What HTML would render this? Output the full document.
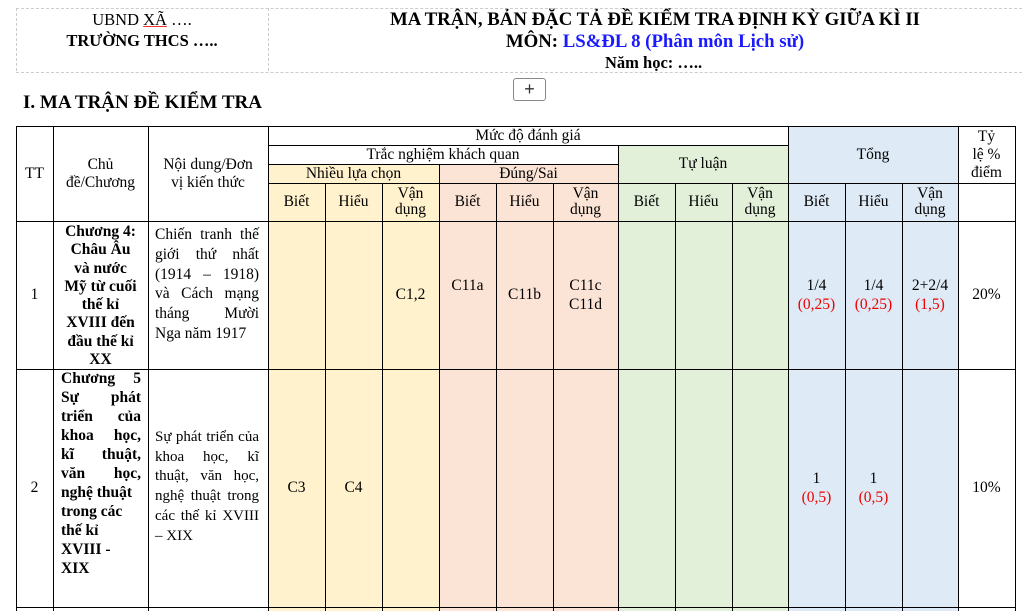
<!DOCTYPE html>
<html><head><meta charset="utf-8"><style>
body{margin:0;width:1022px;height:611px;overflow:hidden;background:#fff;font-family:"Liberation Serif","Times New Roman",serif;color:#000;position:relative}
.a{position:absolute}
.c{position:absolute;display:flex;align-items:center;justify-content:center;text-align:center;font-size:15.5px;line-height:16px;box-sizing:border-box}
.v{position:absolute;width:1px;background:#000}
.h{position:absolute;height:1px;background:#000}
.r{color:#e00}
.b{font-weight:bold}
.js{text-align:justify;text-align-last:justify}
</style></head><body>
<div class="a" style="left:16px;top:8px;width:1006px;height:63px;border-top:1px dashed #ccc;border-bottom:1px dashed #ccc"></div>
<div class="a" style="left:16px;top:8px;width:0;height:63px;border-left:1px dashed #ccc"></div>
<div class="a" style="left:268px;top:8px;width:0;height:63px;border-left:1px dashed #ccc"></div>
<div class="a" style="left:16px;top:9px;width:252px;text-align:center;font-size:16.5px;line-height:21px">UBND <span style="text-decoration:underline;text-decoration-color:#e33">XÃ</span> ….<br><b>TRƯỜNG THCS …..</b></div>
<div class="a b" style="left:278px;top:9px;width:754px;text-align:center;font-size:18.8px;line-height:22px">MA TRẬN, BẢN ĐẶC TẢ ĐỀ KIỂM TRA ĐỊNH KỲ GIỮA KÌ II<br>MÔN: <span style="color:#1a1aff">LS&amp;ĐL 8 (Phân môn Lịch sử)</span></div>
<div class="a b" style="left:605px;top:53px;font-size:16.5px">Năm học: …..</div>
<div class="a" style="left:513px;top:78px;width:31px;height:21px;border:1px solid #888;border-radius:3px;text-align:center;font:18px/20px 'Liberation Sans',sans-serif;color:#333">+</div>
<div class="a b" style="left:23px;top:92px;font-size:19px">I. MA TRẬN ĐỀ KIỂM TRA</div>

<div class="a" style="left:268px;top:164px;width:171px;height:447px;background:#fff2cc"></div>
<div class="a" style="left:439px;top:164px;width:179px;height:447px;background:#fbe4d5"></div>
<div class="a" style="left:618px;top:145px;width:170px;height:466px;background:#e2efd9"></div>
<div class="a" style="left:788px;top:126px;width:170px;height:485px;background:#deeaf6"></div>

<div class="h" style="left:16px;top:126px;width:1000px"></div>
<div class="h" style="left:268px;top:145px;width:520px"></div>
<div class="h" style="left:268px;top:164px;width:350px"></div>
<div class="h" style="left:268px;top:183px;width:748px"></div>
<div class="h" style="left:16px;top:221px;width:1000px"></div>
<div class="h" style="left:16px;top:369px;width:1000px"></div>
<div class="h" style="left:16px;top:607px;width:1000px"></div>
<div class="v" style="left:16px;top:126px;height:485px"></div>
<div class="v" style="left:53px;top:126px;height:485px"></div>
<div class="v" style="left:148px;top:126px;height:485px"></div>
<div class="v" style="left:268px;top:126px;height:485px"></div>
<div class="v" style="left:325px;top:183px;height:428px"></div>
<div class="v" style="left:382px;top:183px;height:428px"></div>
<div class="v" style="left:439px;top:164px;height:447px"></div>
<div class="v" style="left:496px;top:183px;height:428px"></div>
<div class="v" style="left:553px;top:183px;height:428px"></div>
<div class="v" style="left:618px;top:145px;height:466px"></div>
<div class="v" style="left:675px;top:183px;height:428px"></div>
<div class="v" style="left:732px;top:183px;height:428px"></div>
<div class="v" style="left:788px;top:126px;height:485px"></div>
<div class="v" style="left:845px;top:183px;height:428px"></div>
<div class="v" style="left:902px;top:183px;height:428px"></div>
<div class="v" style="left:958px;top:126px;height:485px"></div>
<div class="v" style="left:1015px;top:126px;height:485px"></div>

<div class="c" style="left:16px;top:126px;width:37px;height:95px">TT</div>
<div class="c" style="left:53px;top:126px;width:95px;height:95px;line-height:18px"><div>Chủ<br>đề/Chương</div></div>
<div class="c" style="left:148px;top:126px;width:120px;height:95px;line-height:18px"><div>Nội dung/Đơn<br>vị kiến thức</div></div>
<div class="c" style="left:268px;top:126px;width:520px;height:19px">Mức độ đánh giá</div>
<div class="c" style="left:268px;top:145px;width:350px;height:19px">Trắc nghiệm khách quan</div>
<div class="c" style="left:268px;top:164px;width:171px;height:19px">Nhiều lựa chọn</div>
<div class="c" style="left:439px;top:164px;width:179px;height:19px">Đúng/Sai</div>
<div class="c" style="left:618px;top:145px;width:170px;height:38px">Tự luận</div>
<div class="c" style="left:788px;top:126px;width:170px;height:57px">Tổng</div>
<div class="c" style="left:958px;top:126px;width:57px;height:57px;line-height:18px"><div>Tỷ<br>lệ %<br>điểm</div></div>
<div class="c" style="left:268px;top:183px;width:57px;height:38px">Biết</div>
<div class="c" style="left:325px;top:183px;width:57px;height:38px">Hiểu</div>
<div class="c" style="left:382px;top:183px;width:57px;height:38px"><div>Vận<br>dụng</div></div>
<div class="c" style="left:439px;top:183px;width:57px;height:38px">Biết</div>
<div class="c" style="left:496px;top:183px;width:57px;height:38px">Hiểu</div>
<div class="c" style="left:553px;top:183px;width:65px;height:38px"><div>Vận<br>dụng</div></div>
<div class="c" style="left:618px;top:183px;width:57px;height:38px">Biết</div>
<div class="c" style="left:675px;top:183px;width:57px;height:38px">Hiểu</div>
<div class="c" style="left:732px;top:183px;width:56px;height:38px"><div>Vận<br>dụng</div></div>
<div class="c" style="left:788px;top:183px;width:57px;height:38px">Biết</div>
<div class="c" style="left:845px;top:183px;width:57px;height:38px">Hiểu</div>
<div class="c" style="left:902px;top:183px;width:56px;height:38px"><div>Vận<br>dụng</div></div>

<div class="c" style="left:16px;top:221px;width:37px;height:148px">1</div>
<div class="a b" style="left:53px;top:223px;width:95px;text-align:center;font-size:15.5px;line-height:18.3px">Chương 4:<br>Châu Âu<br>và nước<br>Mỹ từ cuối<br>thế kỉ<br>XVIII đến<br>đầu thế kỉ<br>XX</div>
<div class="a" style="left:155px;top:225px;width:104px;font-size:15.5px;line-height:19.8px">
<div class="js">Chiến tranh thế</div><div class="js">giới thứ nhất</div><div class="js">(1914 – 1918)</div><div class="js">và Cách mạng</div><div class="js">tháng Mười</div><div>Nga năm 1917</div></div>
<div class="c" style="left:382px;top:221px;width:57px;height:148px">C1,2</div>
<div class="c" style="left:439px;top:221px;width:57px;height:130px">C11a</div>
<div class="c" style="left:496px;top:221px;width:57px;height:148px">C11b</div>
<div class="c" style="left:553px;top:221px;width:65px;height:148px;line-height:19px"><div>C11c<br>C11d</div></div>
<div class="c" style="left:788px;top:221px;width:57px;height:148px;line-height:19px"><div>1/4<br><span class="r">(0,25)</span></div></div>
<div class="c" style="left:845px;top:221px;width:57px;height:148px;line-height:19px"><div>1/4<br><span class="r">(0,25)</span></div></div>
<div class="c" style="left:902px;top:221px;width:56px;height:148px;line-height:19px"><div>2+2/4<br><span class="r">(1,5)</span></div></div>
<div class="c" style="left:958px;top:221px;width:57px;height:148px">20%</div>

<div class="c" style="left:16px;top:369px;width:37px;height:238px">2</div>
<div class="a b" style="left:61px;top:369px;width:80px;font-size:15.5px;line-height:19px">
<div class="js">Chương 5</div><div class="js">Sự phát</div><div class="js">triển của</div><div class="js">khoa học,</div><div class="js">kĩ thuật,</div><div class="js">văn học,</div><div>nghệ thuật</div><div>trong các</div><div>thế kỉ</div><div>XVIII -</div><div>XIX</div></div>
<div class="a" style="left:155px;top:428px;width:104px;font-size:15px;line-height:19.7px">
<div class="js">Sự phát triển của</div><div class="js">khoa học, kĩ</div><div class="js">thuật, văn học,</div><div class="js">nghệ thuật trong</div><div class="js">các thế kỉ XVIII</div><div>– XIX</div></div>
<div class="c" style="left:268px;top:369px;width:57px;height:238px">C3</div>
<div class="c" style="left:325px;top:369px;width:57px;height:238px">C4</div>
<div class="c" style="left:788px;top:369px;width:57px;height:238px;line-height:19px"><div>1<br><span class="r">(0,5)</span></div></div>
<div class="c" style="left:845px;top:369px;width:57px;height:238px;line-height:19px"><div>1<br><span class="r">(0,5)</span></div></div>
<div class="c" style="left:958px;top:369px;width:57px;height:238px">10%</div>
</body></html>
